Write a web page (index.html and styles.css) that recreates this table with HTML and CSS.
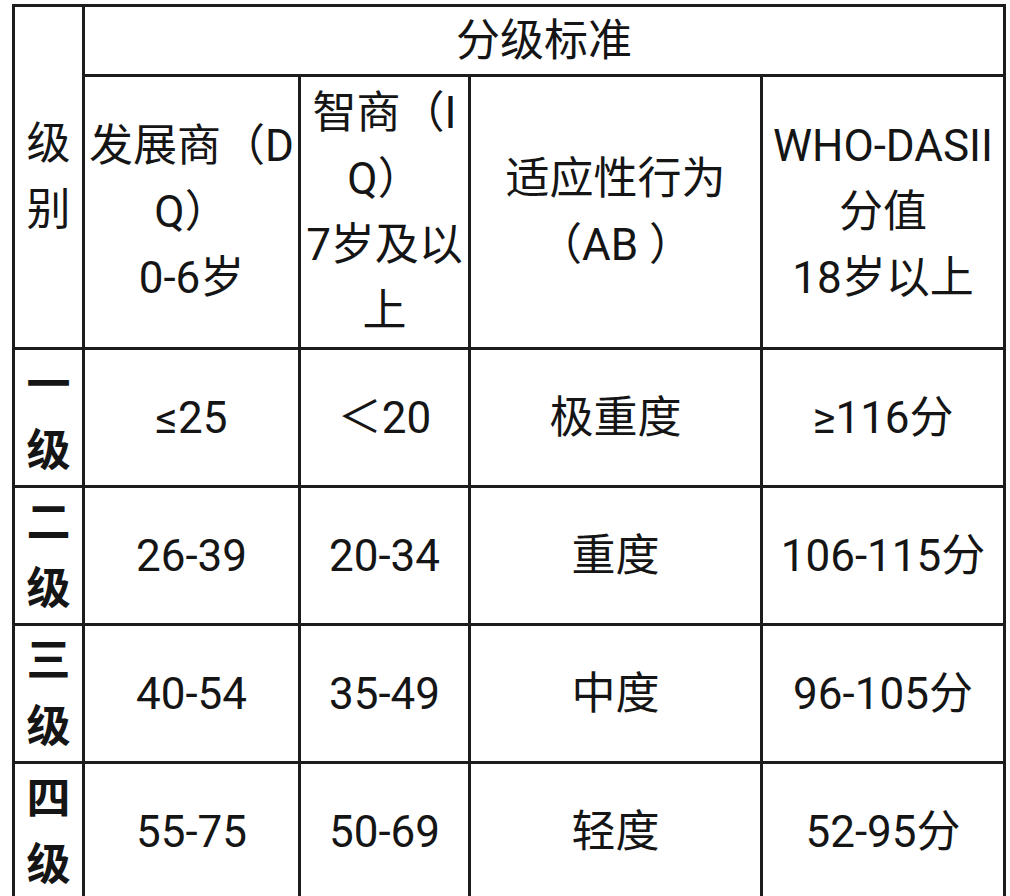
FILE: index.html
```html
<!DOCTYPE html>
<html lang="zh-CN">
<head>
<meta charset="utf-8">
<title>分级标准</title>
<link rel="stylesheet" href="styles.css">
</head>
<body>
<table class="grade">
  <colgroup>
    <col class="c-level">
    <col class="c-dq">
    <col class="c-iq">
    <col class="c-ab">
    <col class="c-who">
  </colgroup>
  <tr class="r-top">
    <td class="lv-head" rowspan="2">级<br>别</td>
    <td colspan="4">分级标准</td>
  </tr>
  <tr class="r-head">
    <td>发展商（D<br>Q）<br>0-6岁</td>
    <td>智商（I<br>Q）<br>7岁及以<br>上</td>
    <td>适应性行为<br>（AB ）</td>
    <td>WHO-DASII<br>分值<br>18岁以上</td>
  </tr>
  <tr class="r-data">
    <td class="lv">一<br>级</td>
    <td>≤25</td>
    <td>＜20</td>
    <td>极重度</td>
    <td>≥116分</td>
  </tr>
  <tr class="r-data">
    <td class="lv">二<br>级</td>
    <td>26-39</td>
    <td>20-34</td>
    <td>重度</td>
    <td>106-115分</td>
  </tr>
  <tr class="r-data">
    <td class="lv">三<br>级</td>
    <td>40-54</td>
    <td>35-49</td>
    <td>中度</td>
    <td>96-105分</td>
  </tr>
  <tr class="r-data">
    <td class="lv">四<br>级</td>
    <td>55-75</td>
    <td>50-69</td>
    <td>轻度</td>
    <td>52-95分</td>
  </tr>
</table>
</body>
</html>
```

FILE: styles.css
```css
html, body {
  margin: 0;
  padding: 0;
  background: #ffffff;
}

body {
  padding: 4px 0 0 12px;
  font-family: "Roboto", "Noto Sans CJK SC", sans-serif;
  color: #151515;
}

.grade {
  border-collapse: collapse;
  table-layout: fixed;
  width: 991px;
  font-size: 44px;
  line-height: 66px;
}

.grade td {
  border: 3px solid #1c1c1c;
  padding: 0;
  text-align: center;
  vertical-align: middle;
  white-space: nowrap;
}

.c-level { width: 70px; }
.c-dq { width: 216px; }
.c-iq { width: 170px; }
.c-ab { width: 292px; }
.c-who { width: 243px; }

.r-top { height: 70px; }
.r-head { height: 273px; }
.r-data { height: 138px; }

.lv {
  font-weight: 700;
}
```
